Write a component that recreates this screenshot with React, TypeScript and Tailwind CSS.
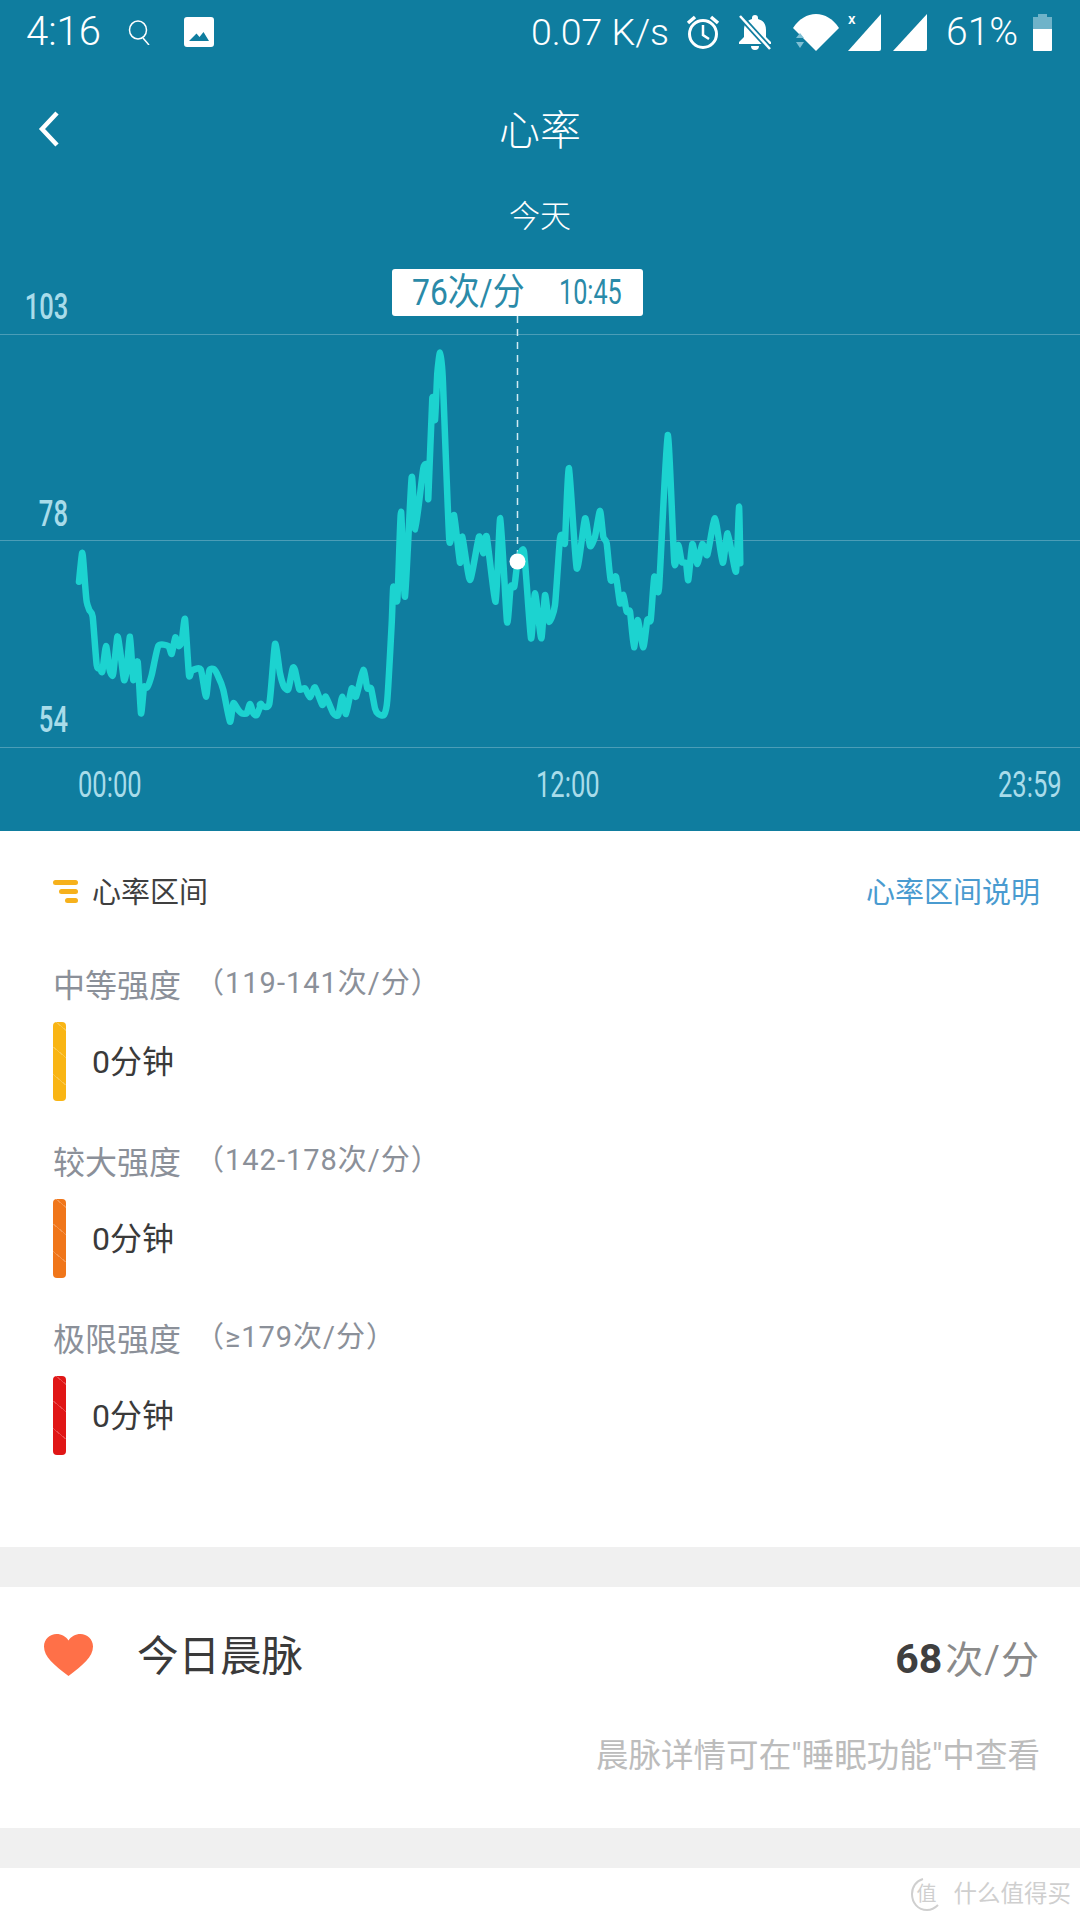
import React from "react";

const CJK = "font-['Roboto','Noto_Sans_CJK_SC',sans-serif]";

// traced from crops of the chart, each crop is 3x the page
const seg1 = [27,125,37,38,45,130,50,185,58,210,68,230,80,375,90,385,97,395,108,318,118,385,125,405,130,400,142,290,150,330,162,420,170,390,180,290,190,420,203,365,213,520,222,442,232,442,245,405,265,318,295,318,305,342,316,292,326,318,335,305,345,237,357,405,365,392,392,388,408,470,418,392,432,388,445,410,460,450,480,545,490,490,505,510,515,520,530,520,540,492,550,520,560,525,573,492];
const seg2 = [0,495,28,492,45,312,60,400,72,440,85,448,98,385,105,390,118,448,135,445,150,472,165,442,187,495,197,470,220,520,235,525,247,470,258,522,275,445,288,470,310,390,322,445,333,445,345,505,355,522,372,525,382,480,395,250];
const seg3 = [40,740,52,780,63,515,75,770,95,412,106,568,130,385,143,380,145,475,157,175,165,240,172,100,180,38,188,110,208,600,222,525,240,668,247,590,270,720,297,590,310,640,320,590,347,785,361,535,381,845,392,740,403,740,413,665,432,635,453,895,465,760,484,895,495,765,507,845,525,795,540,595,553,590];
const seg4 = [15,365,27,145,50,445,75,295,90,378,105,350,120,272,130,350,140,370,152,480,168,470,180,550,190,525,200,575,210,575,222,682,233,600,250,682,262,600,272,600,283,470,297,505,323,45,343,428,355,375,365,425,378,430,385,480,397,372,412,432,427,372,442,405,465,295,488,428,503,340,528,455,537,260,541,430];

function toPage(seg: number[], ox: number, oy: number) {
  const out: [number, number][] = [];
  for (let i = 0; i < seg.length; i += 2) {
    out.push([ox + seg[i] / 3, oy + seg[i + 1] / 3]);
  }
  return out;
}

// soft catmull-rom so the valleys round off like the app's line
function smooth(pts: [number, number][]) {
  const k = 0.1;
  let d = `M${pts[0][0].toFixed(1)} ${pts[0][1].toFixed(1)}`;
  for (let i = 0; i < pts.length - 1; i++) {
    const p0 = pts[Math.max(i - 1, 0)];
    const p1 = pts[i];
    const p2 = pts[i + 1];
    const p3 = pts[Math.min(i + 2, pts.length - 1)];
    const c1x = p1[0] + (p2[0] - p0[0]) * k;
    const c1y = p1[1] + (p2[1] - p0[1]) * k;
    const c2x = p2[0] - (p3[0] - p1[0]) * k;
    const c2y = p2[1] - (p3[1] - p1[1]) * k;
    d += `C${c1x.toFixed(1)} ${c1y.toFixed(1)} ${c2x.toFixed(1)} ${c2y.toFixed(1)} ${p2[0].toFixed(1)} ${p2[1].toFixed(1)}`;
  }
  return d;
}

const LINE = smooth([
  ...toPage(seg1, 70, 540),
  ...toPage(seg2, 260, 540),
  ...toPage(seg3, 380, 340),
  ...toPage(seg4, 560, 420),
]);

const ZONES = [
  { name: "中等强度", range: "（119-141次/分）", bar: "bg-[#f9b514]" },
  { name: "较大强度", range: "（142-178次/分）", bar: "bg-[#f0761a]" },
  { name: "极限强度", range: "（≥179次/分）", bar: "bg-[#e01616]" },
];

function StatusBar() {
  return (
    <div className={`h-[64px] flex items-center text-white ${CJK}`}>
      <span className="ml-[26px] w-[101px] text-[40px] font-light">4:16</span>
      <svg width="27" height="25" viewBox="0 0 27 25" fill="none" stroke="white" strokeWidth="1.500">
        <ellipse cx="11" cy="10" rx="8.500" ry="9" />
        <path d="M16 18l6 7" />
      </svg>
      <svg className="ml-[30px]" width="30" height="30" viewBox="0 0 30 30">
        <path fillRule="evenodd" fill="white" d="M3 0h24a3 3 0 0 1 3 3v24a3 3 0 0 1-3 3H3a3 3 0 0 1-3-3V3a3 3 0 0 1 3-3zM5 24h20l-5.500-9-4 5-3-3.500z" />
      </svg>
      <span className="ml-auto text-[37.500px] font-light w-[137px] whitespace-nowrap">0.07 K/s</span>
      <svg className="ml-[18px]" width="34" height="36" viewBox="0 0 34 36" fill="none" stroke="white" strokeWidth="3">
        <circle cx="17" cy="20" r="13.500" />
        <path d="M17 11v10l6 4" strokeWidth="2.500" />
        <path d="M2 9l7-6M32 9l-7-6" strokeWidth="3.500" />
      </svg>
      <svg className="ml-[17px]" width="36" height="37" viewBox="0 0 36 37">
        <path fill="white" d="M18 1a3 3 0 0 1 3 3v1c6 1.500 8 6 8 11v7l5 5v2H2v-2l5-5v-7c0-5 2-9.500 8-11V4a3 3 0 0 1 3-3zM14 32h8a4 4 0 0 1-8 0z" />
        <path d="M3 2l30 33" stroke="#0f7d9f" strokeWidth="6" />
        <path d="M3 2l30 33" stroke="white" strokeWidth="2.500" />
      </svg>
      <svg className="ml-[19px]" width="48" height="37" viewBox="0 0 48 37">
        <path fill="white" d="M1 14C7 5 15 0 24 0s17 5 23 14L24 37z" />
        <path fill="#7fbfd4" d="M4 24l4-5 4 5zM4 28h8l-4 6z" />
      </svg>
      <div className="relative ml-[8px] w-[33px] h-[37px]">
        <svg className="absolute inset-0" width="33" height="37" viewBox="0 0 33 37">
          <path fill="white" d="M33 0v35a2 2 0 0 1-2 2H0z" />
        </svg>
        <span className="absolute -top-[2px] left-0 text-[15px] font-medium leading-[14px]">x</span>
      </div>
      <svg className="ml-[12px]" width="34" height="37" viewBox="0 0 34 37">
        <path fill="white" d="M34 0v35a2 2 0 0 1-2 2H0z" />
      </svg>
      <span className="ml-[19px] text-[39px] font-light w-[73px] whitespace-nowrap">61%</span>
      <div className="ml-[14px] mr-[28px] w-[19px] h-[37px] flex flex-col items-center">
        <div className="w-[9px] h-[3px] bg-[#6fb3c9]" />
        <div className="w-[19px] h-[12px] bg-[#6fb3c9]" />
        <div className="w-[19px] h-[22px] bg-white rounded-b-[1px]" />
      </div>
    </div>
  );
}

function Chart() {
  const yLabel = `absolute right-[1012px] text-[36px] leading-[36px] font-medium text-[#a9dcea] scale-x-[0.71] origin-right ${CJK}`;
  const xLabel = `absolute top-[529px] text-[36px] leading-[36px] text-[#a9dcea] scale-x-[0.71] origin-left ${CJK}`;
  return (
    <div className="relative h-[593px]">
      <svg className="absolute inset-0" width="1080" height="593" viewBox="0 238 1080 593" fill="none">
        <path d="M0 334.500H1080M0 540.500H1080M0 747.500H1080" stroke="#ffffff" strokeOpacity="0.25" />
        <path d="M517.500 316V555" stroke="#cfeaf2" strokeWidth="1.500" strokeDasharray="7 6" />
        <path d={LINE} stroke="#1cd3d0" strokeWidth="6.500" strokeLinejoin="round" strokeLinecap="round" />
        <circle cx="517.500" cy="561.500" r="8" fill="white" />
      </svg>
      <span className={`${yLabel} top-[51px]`}>103</span>
      <span className={`${yLabel} top-[258px]`}>78</span>
      <span className={`${yLabel} top-[464px]`}>54</span>
      <span className={`${xLabel} left-[78px]`}>00:00</span>
      <span className={`${xLabel} left-[536px]`}>12:00</span>
      <span className={`${xLabel} left-[998px]`}>23:59</span>
      <div className={`absolute left-[392px] top-[31px] w-[251px] h-[47px] bg-white rounded-[3px] flex items-center text-[#2a8aa8] ${CJK}`}>
        <span className="ml-[20px] w-[147px] shrink-0 text-[37px] leading-[47px] scale-x-[0.86] origin-left whitespace-nowrap">76次/分</span>
        <span className="shrink-0 text-[35px] leading-[47px] scale-x-[0.72] origin-left">10:45</span>
      </div>
    </div>
  );
}

function ZoneRow({ name, range, bar }: { name: string; range: string; bar: string }) {
  return (
    <div className="mb-[40px]">
      <div className="h-[44px] flex items-center text-[#8b9099]">
        <span className="w-[142px] text-[32px] leading-[44px] whitespace-nowrap">{name}</span>
        <span className="text-[29px] leading-[44px] -mt-[6px] tracking-[1px] whitespace-nowrap">{range}</span>
      </div>
      <div className="mt-[14px] h-[79px] flex items-center">
        <div className={`w-[13px] h-[79px] rounded-[4px] ${bar} bg-[repeating-linear-gradient(40deg,transparent_0px,transparent_20px,rgba(255,255,255,0.22)_20px,rgba(255,255,255,0.22)_21px)]`} />
        <span className="ml-[26px] text-[32px] text-[#3a3a3a]">0分钟</span>
      </div>
    </div>
  );
}

export default function App() {
  return (
    <div className={`w-[1080px] h-[1920px] overflow-hidden bg-white flex flex-col ${CJK}`}>
      <div className="bg-[#0f7d9f] h-[831px]">
        <StatusBar />
        <div className="relative h-[132px] flex items-center justify-center text-white">
          <svg className="absolute left-[38px] top-[47px]" width="22" height="36" viewBox="0 0 22 36" fill="none" stroke="white" strokeWidth="4.500">
            <path d="M19 2L4 18l15 16" />
          </svg>
          <span className="text-[41px] font-light mt-[4px]">心率</span>
        </div>
        <div className="h-[42px] flex items-center justify-center text-white text-[31px] font-light">今天</div>
        <Chart />
      </div>

      <div className="h-[716px] pl-[53px] pr-[40px]">
        <div className="mt-[33px] h-[60px] flex items-center">
          <svg width="25" height="24" viewBox="0 0 25 24" fill="#f6b11c" className="-mt-[5px]">
            <rect x="0" y="0" width="25" height="5" rx="2.500" />
            <rect x="6" y="9" width="19" height="5" rx="2.500" />
            <rect x="12" y="18" width="13" height="5" rx="2.500" />
          </svg>
          <span className="ml-[14px] text-[29px] text-[#3f3f3f]">心率区间</span>
          <span className="ml-auto text-[29px] text-[#4a9bd0]">心率区间说明</span>
        </div>
        <div className="mt-[40px]">
          {ZONES.map((z) => (
            <ZoneRow key={z.name} {...z} />
          ))}
        </div>
      </div>

      <div className="h-[40px] bg-[#f0f0f0]" />

      <div className="h-[241px] pt-[28px] pl-[44px] pr-[40px]">
        <div className="h-[80px] flex items-center">
          <svg width="49" height="42" viewBox="0 0 49 42" fill="#ff7048">
            <path d="M24.500 42C10 31 0 23 0 12.500 0 5 6 0 12.500 0c5 0 9.500 2.500 12 6.500C27 2.500 31.500 0 36.500 0 43 0 49 5 49 12.500 49 23 39 31 24.500 42z" />
          </svg>
          <span className="ml-[44px] mt-[4px] text-[41.500px] text-[#3a3a3a]">今日晨脉</span>
          <div className="ml-auto mt-[10px] flex items-center">
            <span className="text-[41px] font-bold text-[#3f3f3f]">68</span>
            <span className="ml-[3px] text-[38px] tracking-[1px] text-[#8a8a8a]">次/分</span>
          </div>
        </div>
        <div className="mt-[36px] h-[50px] flex items-center justify-end text-[32.500px] tracking-[0.05px] text-[#bcbcbc] whitespace-nowrap">
          晨脉详情可在"睡眠功能"中查看
        </div>
      </div>

      <div className="h-[40px] bg-[#f0f0f0]" />

      <div className="flex-1 flex items-center justify-end pr-[9px] text-[#cfcfcf]">
        <div className="relative w-[32px] h-[34px] flex items-center justify-center">
          <svg className="absolute inset-0" width="32" height="34" viewBox="0 0 32 34" fill="none" stroke="#cfcfcf" strokeWidth="2">
            <path d="M12 2C5 4 1 10 1 17c0 9 6 16 15 16 4 0 8-2 11-5" />
          </svg>
          <span className="text-[20px] leading-[20px]">值</span>
        </div>
        <span className="ml-[11px] text-[23.500px] leading-[30px]">什么值得买</span>
      </div>
    </div>
  );
}
